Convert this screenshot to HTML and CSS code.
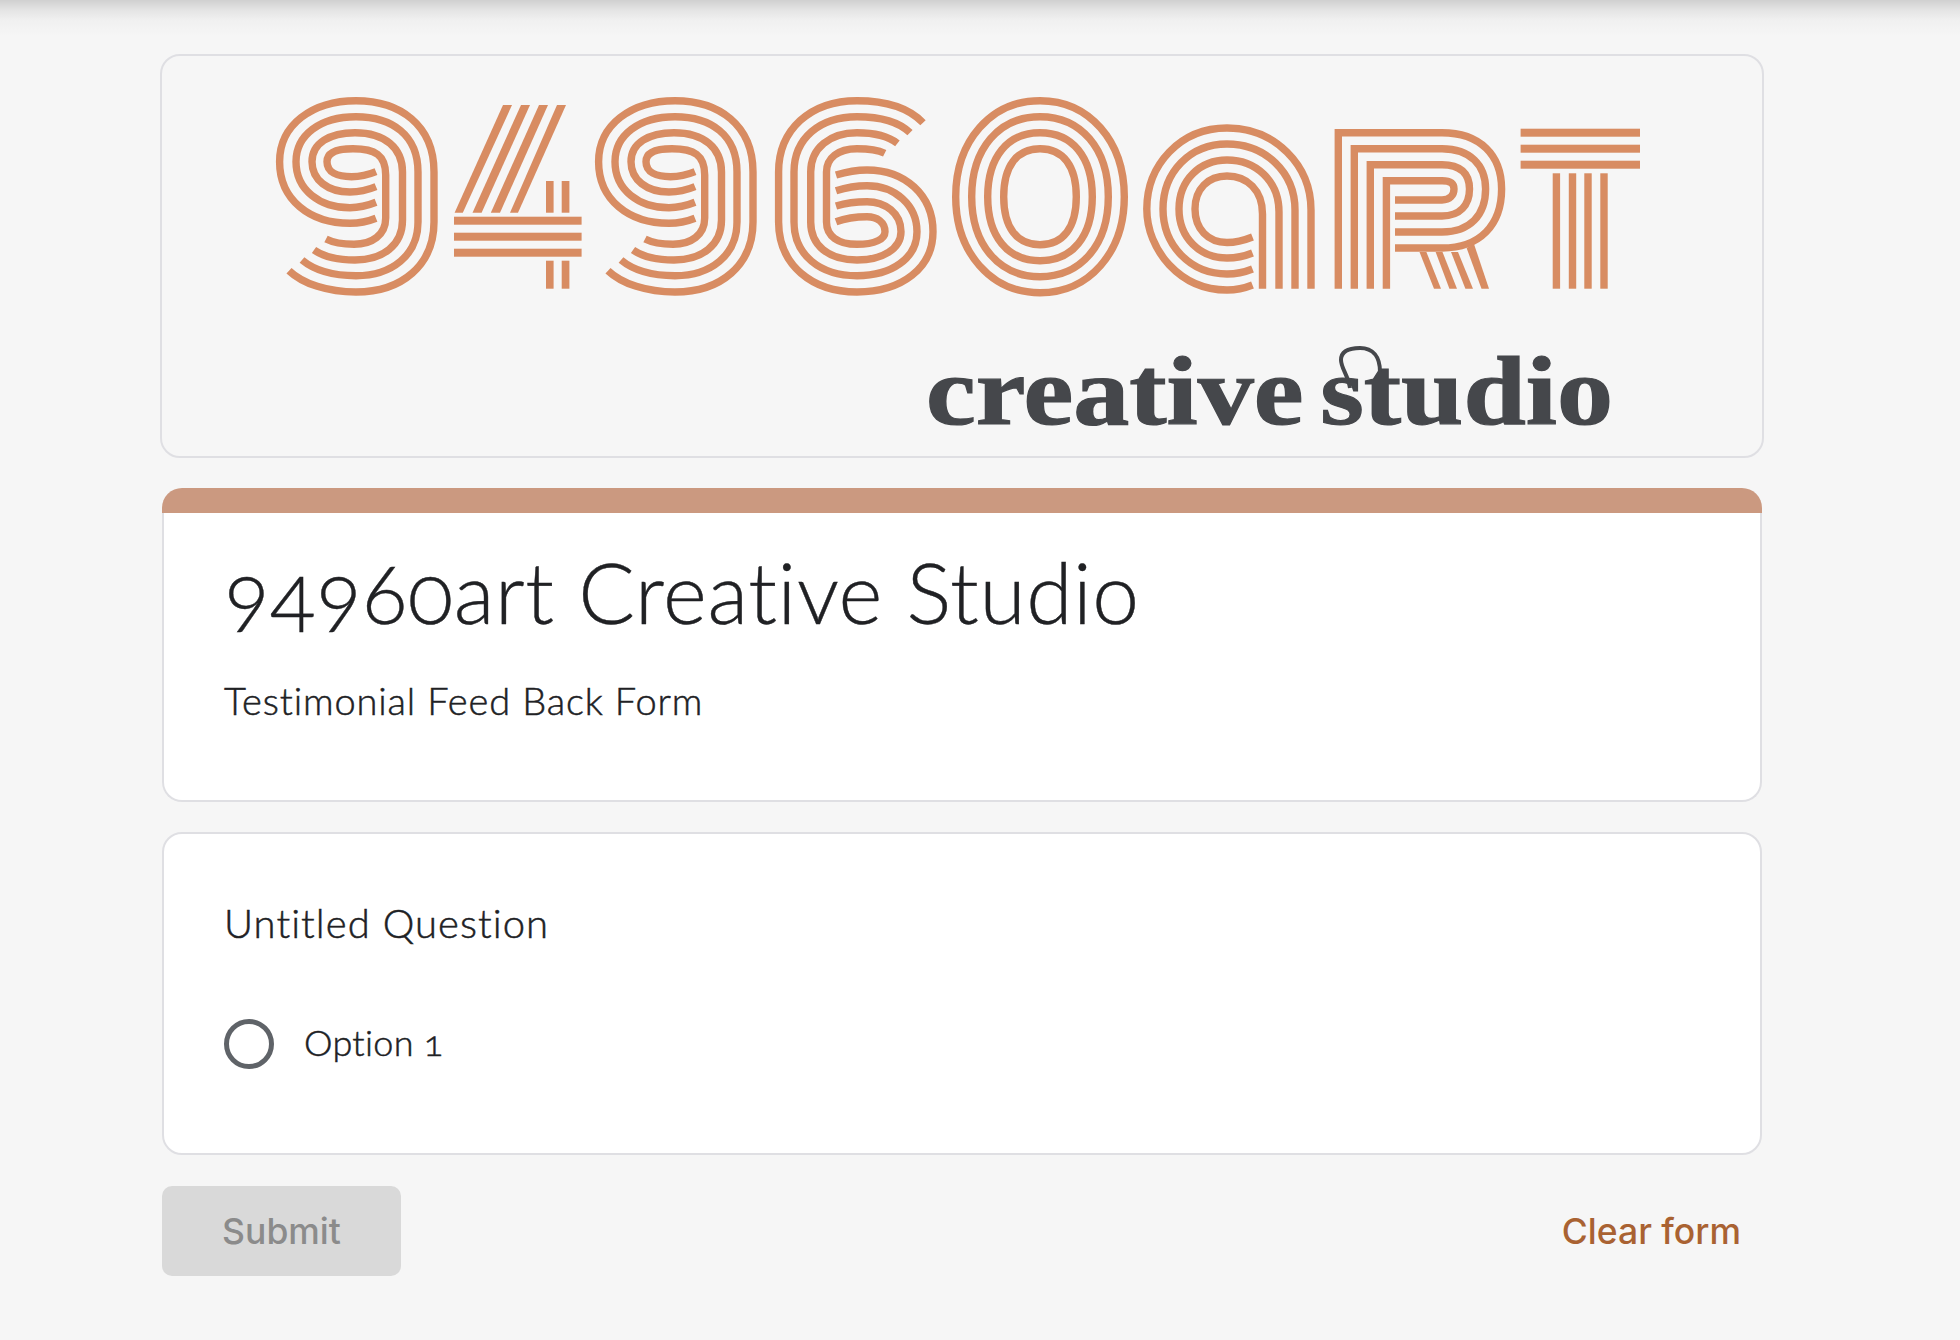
FILE: index.html
```html
<!DOCTYPE html>
<html lang="en">
<head>
<meta charset="utf-8">
<title>94960art Creative Studio</title>
<link rel="stylesheet" href="styles.css">
</head>
<body>
<main class="page">
  <header class="banner">
    <svg class="logo" viewBox="160 54 1604 404" role="img" aria-label="94960art creative studio">
      <defs>
        <g id="nine">
          <path d="M376 218.3C368 221.5 360 223.3 350 223.3C310 223.3 279.6 200 279.6 161.7C279.6 125 312 100.7 356 100.7C400 100.7 434 125 434 172L434 222C434 265 402 292 356 292C328 292 303 284 289 270.7"/>
          <path d="M376 202.3C368 205.5 360 207.7 350 207.7C320 207.7 296 190 296 161.7C296 135 320 116.7 356 116.7C392 116.7 418 135 418 172L418 222C418 255 392 275.7 356 275.7C333 275.7 314 270 302 260"/>
          <path d="M376 186.7C368 190 360 192 350 192C328 192 312 180 312 161.7C312 143 330 132.7 355 132.7C385 132.7 402.5 148 402.5 172L402.5 220C402.5 245 383 260 355 260C338 260 324 257 314 250"/>
          <path d="M376 171.7C368 175 360 176.7 351.5 176.7C337 176.7 327 172 327 161.7C327 152 338 148.7 353 148.7C375 148.7 385.7 155 385.7 175L385.7 218C385.7 235 372 244.3 354 244.3C344 244.3 334 243 326 239"/>
        </g>
      </defs>
      <g class="stripes">
        <use href="#nine"/>
        <use href="#nine" x="319"/>
        <!-- 6 -->
        <path d="M923 122.7C908 107 885 100.7 857 100.7C810 100.7 778.6 130 778.6 172L778.6 222C778.6 265 812 292 857 292C902 292 933 268 933 231.7C933 195 905 170 867 170C856 170 846 172 836 175"/>
        <path d="M910 132.7C898 121 880 116.7 857 116.7C820 116.7 794 138 794 172L794 222C794 255 820 275.7 857 275.7C892 275.7 917 258 917 231.7C917 205 895 185.7 867 185.7C856 185.7 846 187.5 836 190.7"/>
        <path d="M897.4 143.3C888 136 875 132.7 857 132.7C830 132.7 810.7 148 810.7 172L810.7 222C810.7 245 828 260 857 260C882 260 901 249 901 231.7C901 213 885 201.7 867 201.7C856 201.7 846 203 836 206"/>
        <path d="M884.7 153.3C878 150 868 148.7 857 148.7C838 148.7 826.5 158 826.5 172L826.5 222C826.5 236 838 244.3 857 244.3C875 244.3 885 239 885 231.7C885 222 877 216.7 867 216.7C856 216.7 846 218 836 221.7"/>
        <!-- 0 -->
        <path d="M955.7 196.7C955.7 141 991 100.7 1040 100.7C1089 100.7 1124.3 141 1124.3 196.7C1124.3 252.4 1089 292.7 1040 292.7C991 292.7 955.7 252.4 955.7 196.7Z"/>
        <path d="M971.7 196.7C971.7 148.7 999 116.7 1040 116.7C1081 116.7 1108.3 148.7 1108.3 196.7C1108.3 244.7 1081 276.7 1040 276.7C999 276.7 971.7 244.7 971.7 196.7Z"/>
        <path d="M987.7 196.7C987.7 157 1007.6 132.7 1040 132.7C1072.4 132.7 1092.3 157 1092.3 196.7C1092.3 236.4 1072.4 260.7 1040 260.7C1007.6 260.7 987.7 236.4 987.7 196.7Z"/>
        <path d="M1003.7 196.7C1003.7 166 1016.8 148.7 1040 148.7C1063.2 148.7 1076.3 166 1076.3 196.7C1076.3 227.4 1063.2 244.7 1040 244.7C1016.8 244.7 1003.7 227.4 1003.7 196.7Z"/>
        <!-- a -->
        <path d="M1252.5 285C1245 288 1236 290 1227 290C1180 290 1146.8 250 1146.8 209C1146.8 165 1180 128 1227 128C1275 128 1311 165 1311 210L1311 288.7"/>
        <path d="M1252.5 269C1245 272 1236 274 1227 274C1190 274 1163 245 1163 209C1163 172 1190 144 1227 144C1265 144 1295 172 1295 210L1295 288.7"/>
        <path d="M1252.5 253C1245 256 1236 258 1227 258C1200 258 1179 238 1179 209C1179 180 1200 160 1227 160C1255 160 1279 180 1279 212L1279 288.7"/>
        <path d="M1252.5 237C1245 240 1236 242.5 1227 242.5C1208 242.5 1195 229 1195 209C1195 189 1208 176 1227 176C1247 176 1262.5 190 1262.5 214L1262.5 288.7"/>
        <!-- R -->
        <path d="M1338.3 288.7L1338.3 132.7L1442 132.7C1480 132.7 1501.6 155 1501.6 189C1501.6 225 1480 248 1442 248L1395 248"/>
        <path d="M1354.3 288.7L1354.3 148.7L1442 148.7C1470 148.7 1485.6 165 1485.6 189C1485.6 215 1470 232 1442 232L1395 232"/>
        <path d="M1370.3 288.7L1370.3 164.7L1442 164.7C1460 164.7 1469.5 173 1469.5 189C1469.5 205 1460 216 1442 216L1395 216"/>
        <path d="M1386.4 288.7L1386.4 180.7L1442 180.7C1450 180.7 1454 183 1454 189C1454 195 1450 200 1442 200L1395 200"/>
      </g>
      <g class="bars">
        <!-- 4 -->
        <polygon points="503,105 512,105 462.8,212.7 454.6,212.7"/>
        <polygon points="521,105 530,105 481.6,212.7 472.5,212.7"/>
        <polygon points="539,105 548,105 500,212.7 490.8,212.7"/>
        <polygon points="557,105 566,105 518,212.7 510,212.7"/>
        <rect x="454" y="216.7" width="127.6" height="8"/>
        <rect x="454" y="232.7" width="127.6" height="8"/>
        <rect x="454" y="248.7" width="127.6" height="8"/>
        <rect x="546" y="181" width="7.6" height="31.7"/>
        <rect x="561.7" y="181" width="7.7" height="31.7"/>
        <rect x="546" y="260.7" width="7.6" height="28"/>
        <rect x="561.7" y="260.7" width="7.7" height="28"/>
        <!-- R legs -->
        <polygon points="1419.5,252 1426.4,252 1441,288.7 1434,288.7"/>
        <polygon points="1435.6,252 1442.5,252 1457,288.7 1449.4,288.7"/>
        <polygon points="1451,252 1458,252 1473,288.7 1465.4,288.7"/>
        <polygon points="1466.6,248 1474,244 1489,288.7 1481.5,288.7"/>
        <!-- T -->
        <rect x="1520.6" y="128.7" width="119.4" height="8"/>
        <rect x="1520.6" y="144.7" width="119.4" height="8"/>
        <rect x="1520.6" y="160.7" width="119.4" height="8"/>
        <rect x="1552.7" y="173.3" width="7.4" height="115.4"/>
        <rect x="1568.8" y="173.3" width="7.4" height="115.4"/>
        <rect x="1584.3" y="173.3" width="7.4" height="115.4"/>
        <rect x="1600.3" y="173.3" width="7.4" height="115.4"/>
      </g>
      <text class="tagline" x="926" y="424.3" textLength="687" lengthAdjust="spacingAndGlyphs">creative studio</text>
      <path class="flourish" d="M1350 388C1348 375 1341 368 1341 360C1341 352 1348 348 1360 348C1373 348 1380 357 1380 372L1380 395"/>
    </svg>
  </header>

  <section class="title-card">
    <div class="accent"></div>
    <div class="title-body">
      <h1 class="form-title">94960art Creative Studio</h1>
      <p class="form-desc">Testimonial Feed Back Form</p>
    </div>
  </section>

  <section class="question-card">
    <h2 class="question">Untitled Question</h2>
    <label class="option">
      <span class="radio"></span>
      <span class="option-text">Option 1</span>
    </label>
  </section>

  <footer class="actions">
    <button class="submit" type="button">Submit</button>
    <button class="clear" type="button">Clear form</button>
  </footer>
</main>
</body>
</html>
```
FILE: styles.css
```css
* { box-sizing: border-box; }

html, body { margin: 0; padding: 0; }

body {
  min-height: 1340px;
  background-color: #f6f6f6;
  background-image: linear-gradient(#d0d0d0 0, #e4e4e4 10px, #f0f0f0 20px, #f6f6f6 36px);
  background-repeat: no-repeat;
  background-size: 100% 36px;
  color: #202124;
  font-family: "Lato", "Liberation Sans", sans-serif;
  font-variant-ligatures: none;
}

.page {
  width: 1764px;
  padding: 54px 0 0 160px;
}

.banner {
  height: 404px;
  border: 2px solid #dfdfe3;
  border-radius: 20px;
  overflow: hidden;
}

.logo {
  display: block;
  width: 1604px;
  height: 404px;
  margin: -2px;
}

.stripes {
  fill: none;
  stroke: #d88c62;
  stroke-width: 7.4;
}

.bars { fill: #d88c62; }

.tagline {
  fill: #45474b;
  stroke: #45474b;
  stroke-width: 1.2;
  font-family: "Liberation Serif", serif;
  font-weight: 700;
  font-size: 98px;
  word-spacing: -10px;
}

.flourish {
  fill: none;
  stroke: #45474b;
  stroke-width: 4;
}

.title-card {
  width: 1600px;
  height: 314px;
  margin: 30px 2px 0;
  display: flex;
  flex-direction: column;
}

.accent {
  height: 25px;
  flex: none;
  background: #cb9980;
  border-radius: 20px 20px 0 0;
}

.title-body {
  flex: 1;
  padding: 31px 60px 0;
  background: #fff;
  border: 2px solid #dfdfe3;
  border-top: 0;
  border-radius: 0 0 20px 20px;
}

.form-title {
  margin: 0;
  font-size: 84px;
  line-height: 96px;
  font-weight: 300;
  letter-spacing: 0.6px;
  font-variant-numeric: oldstyle-nums;
  -webkit-text-stroke: 0.4px #202124;
}

.form-desc {
  margin: 36px 0 0;
  font-size: 38px;
  line-height: 48px;
  font-weight: 300;
  letter-spacing: 0.85px;
  -webkit-text-stroke: 0.5px #202124;
}

.question-card {
  width: 1600px;
  height: 323px;
  margin: 30px 2px 0;
  padding: 59px 60px 0;
  background: #fff;
  border: 2px solid #dfdfe3;
  border-radius: 20px;
}

.question {
  margin: 0;
  font-size: 40px;
  line-height: 60px;
  font-weight: 300;
  letter-spacing: 1.05px;
  -webkit-text-stroke: 0.5px #202124;
}

.option {
  display: flex;
  align-items: center;
  gap: 30px;
  margin-top: 66px;
}

.radio {
  width: 50px;
  height: 50px;
  border: 5px solid #5f6368;
  border-radius: 50%;
}

.option-text {
  padding-bottom: 3px;
  font-size: 36px;
  line-height: 47px;
  font-weight: 300;
  letter-spacing: 0.3px;
  font-variant-numeric: oldstyle-nums;
  -webkit-text-stroke: 0.5px #202124;
}

.actions {
  display: flex;
  justify-content: space-between;
  align-items: center;
  width: 1600px;
  margin: 31px 2px 0;
}

.submit, .clear {
  border: 0;
  font-family: "Inter", "Liberation Sans", sans-serif;
  font-size: 35.5px;
  font-weight: 500;
}

.submit {
  width: 239px;
  height: 90px;
  background: #d9d9d9;
  border-radius: 10px;
  color: #8b8b8b;
}

.clear {
  background: none;
  padding: 0 21px 0 0;
  color: #a96232;
}
```
